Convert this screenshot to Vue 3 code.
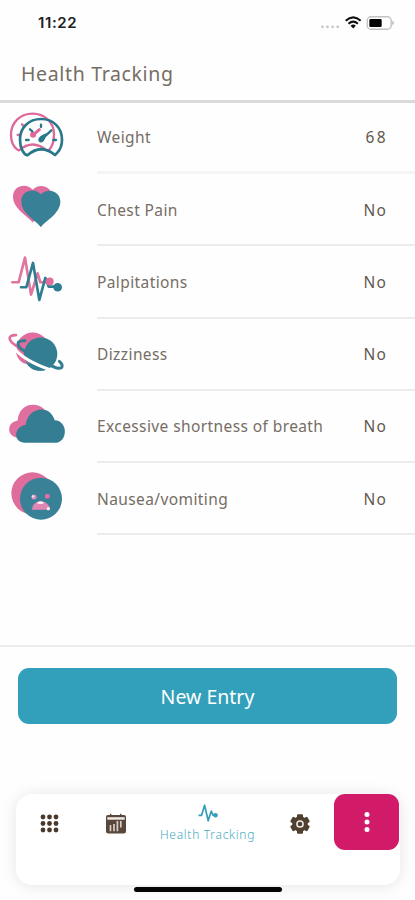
<script setup>
const rows = [
  { id: 'weight', label: 'Weight', value: '68', box: '0 3 240 216' },
  { id: 'chest', label: 'Chest Pain', value: 'No', box: '0 3.6 240 216' },
  { id: 'palpitations', label: 'Palpitations', value: 'No', box: '0 4.2 240 216' },
  { id: 'dizziness', label: 'Dizziness', value: 'No', box: '0 -1.2 240 216' },
  { id: 'breath', label: 'Excessive shortness of breath', value: 'No', box: '0 -0.6 240 216' },
  { id: 'nausea', label: 'Nausea/vomiting', value: 'No', box: '0 0 240 216' }
]
const dots = [3, 9.5, 16]
const teeth = [0, 60, 120, 180, 240, 300]
</script>

<template>
  <div class="screen">
    <div class="status">
      <span class="time">11:22</span>
      <svg class="indicators" width="76" height="16" viewBox="0 0 76 16">
        <g fill="#c6c6c6">
          <circle cx="2.4" cy="11.8" r="1.4" /><circle cx="7.5" cy="11.8" r="1.4" />
          <circle cx="12.6" cy="11.8" r="1.4" /><circle cx="17.7" cy="11.8" r="1.4" />
        </g>
        <g fill="none" stroke="#111" stroke-width="2.1">
          <path d="M25.7 5.7Q33.2-1 40.7 5.7" />
          <path d="M28.5 8.8Q33.2 4.6 37.9 8.8" />
        </g>
        <path d="M30.6 10.7Q33.2 8.5 35.8 10.7L33.2 13.5Z" fill="#111" />
        <rect x="47.2" y="1.8" width="24" height="12.4" rx="3.8" fill="#fff" stroke="#c2c2c2" stroke-width="1.4" />
        <rect x="49.3" y="4.1" width="12.4" height="8" rx="1.3" fill="#050505" />
        <path d="M72.2 5.8Q75.8 8 72.2 10.3Z" fill="#bdbdbd" />
      </svg>
    </div>

    <header class="header"><h1>Health Tracking</h1></header>

    <main class="list">
      <div v-for="row in rows" :key="row.id" class="row">
        <svg class="row-icon" :viewBox="row.box">
          <template v-if="row.id === 'weight'">
            <g fill="none" stroke="#df689b" stroke-width="7" stroke-linejoin="round" stroke-linecap="round">
              <path d="M57 151L52 149C39 139 33 121 33 105C33 66 62 41 98 41C134 41 162 67 162 103C162 124 157 139 148 149L142 153Q99 115 57 151" />
              <path d="M53 105H60M66 73L71 78" />
              <path d="M99 105L118 89" stroke-width="9" />
            </g>
            <circle cx="99" cy="104" r="9" fill="#df689b" />
            <g fill="none" stroke="#28778b" stroke-width="8" stroke-linejoin="round" stroke-linecap="round">
              <path d="M82 166Q73 163 67 151Q60 137 60 119C60 82 87 57 123 57C160 57 186 83 186 119Q186 143 172 158L165 165Q123 130 82 166Z" />
              <path d="M78 120H86M90 88L97 94M123 74V81M160 120H168" stroke-width="7" />
              <path d="M125 118L154 91" stroke-width="7" />
            </g>
            <path d="M116 124C112 115 120 109 128 104L141 99L135 116C131 127 122 131 116 124Z" fill="#28778b" />
          </template>
          <template v-else-if="row.id === 'chest'">
            <path d="M98 152C84 132 39 112 39 74C39 43 78 31 98 54C115 32 158 42 157 76C157 111 115 131 98 152Z" fill="#df6d9d" />
            <path d="M123 166C108 145 64 126 64 88C64 57 104 46 123 68C141 46 182 57 181 90C181 126 137 146 123 166Z" fill="#378096" />
          </template>
          <template v-else-if="row.id === 'palpitations'">
            <g fill="none" stroke-width="8" stroke-linejoin="round" stroke-linecap="round">
              <path d="M37 116H56L75 42L93 153L113 89L121 116H148" stroke="#e0759f" />
              <path d="M63 131H79L99 58L118 169L136 103L146 129H169" stroke="#2e7e91" />
            </g>
            <circle cx="149" cy="114" r="12" fill="#e26c9d" />
            <circle cx="173" cy="131" r="13" fill="#2e7e91" />
          </template>
          <template v-else-if="row.id === 'dizziness'">
            <circle cx="98" cy="90" r="48" fill="#e06d9e" />
            <circle cx="122" cy="107" r="50" fill="#347e92" />
            <path d="M44 91C65 118 102 137 150 154" fill="none" stroke="#fefefe" stroke-width="9" />
            <path d="M48 102C51 119 63 132 76 136L90 136L76 127C67 122 57 112 48 102Z" fill="#e06d9e" />
            <path d="M76 130Q102 146 137 154Q97 166 76 130Z" fill="#347e92" />
            <path d="M48 50C22 49 24 66 46 80L66 94" fill="none" stroke="#e06d9e" stroke-width="8" stroke-linecap="round" />
            <path d="M75 67C46 65 49 83 72 97C104 119 141 138 168 148C191 154 190 139 178 129" fill="none" stroke="#347e92" stroke-width="9" stroke-linecap="round" />
          </template>
          <template v-else-if="row.id === 'breath'">
            <path d="M50 142C19 136 20 96 53 91C55 62 73 44 99 44C119 43 133 54 140 69L133 142Z" fill="#df6f9e" />
            <path d="M75 158C40 158 39 111 77 104C80 77 100 58 124 58C146 58 158 72 164 90C205 91 205 158 164 158Z" fill="#357d93" />
          </template>
          <template v-else>
            <circle cx="97" cy="94" r="63" fill="#df6d9c" />
            <circle cx="123" cy="110" r="63" fill="#388197" />
            <circle cx="102" cy="105" r="7.5" fill="#d991bd" /><circle cx="99" cy="103" r="3.5" fill="#f4e6f0" />
            <circle cx="142" cy="103" r="7.5" fill="#df6da6" />
            <path d="M96 143C97 127 108 118 122 118C138 118 149 129 150 143Z" fill="#df86b2" />
            <path d="M110 123Q121 113 133 123Q121 129 110 123Z" fill="#fff0f5" />
            <circle cx="145" cy="140" r="5" fill="#fff0f5" />
          </template>
        </svg>
        <div class="row-body">
          <span class="label">{{ row.label }}</span>
          <span class="value">{{ row.value }}</span>
        </div>
      </div>
    </main>

    <section class="action"><button class="new-entry">New Entry</button></section>

    <footer class="footer">
      <nav class="nav">
        <div class="nav-item">
          <svg width="19" height="19" viewBox="0 0 19 19" fill="#49382b">
            <template v-for="y in dots" :key="y">
              <circle v-for="x in dots" :key="x" :cx="x" :cy="y" r="2.4" />
            </template>
          </svg>
        </div>
        <div class="nav-item">
          <svg width="22" height="22" viewBox="0 0 22 22">
            <path d="M3 2H5V.8H6.4V2H15V.8H16.4V2H19Q21 2 21 4V18Q21 20.5 18.5 20.5H3.5Q1 20.5 1 18V4Q1 2 3 2Z" fill="#59473b" />
            <path d="M2.3 4.2H19.7V6.7H2.3Z" fill="#eeeae7" />
            <path d="M5.5 12V18.2M9 11V18.2M12.4 8V18.2M15.8 8V14.5" stroke="#d6cec8" stroke-width="1.7" />
          </svg>
        </div>
        <div class="nav-item active">
          <svg width="20" height="20" viewBox="0 0 20 20">
            <path d="M.5 12.4H3.5L6.6 2.2L10.2 17.8L13.3 8L15 12.2H17" fill="none" stroke="#359eb7" stroke-width="1.7" stroke-linejoin="round" />
            <circle cx="17.5" cy="12.3" r="2.3" fill="#359eb7" />
          </svg>
          <span>Health Tracking</span>
        </div>
        <div class="nav-item">
          <svg width="22" height="22" viewBox="0 0 22 22">
            <g fill="#50402f">
              <circle cx="11" cy="11" r="7.8" />
              <rect v-for="angle in teeth" :key="angle" x="8" y="1.2" width="6" height="6" rx="1" :transform="`rotate(${angle} 11 11)`" />
            </g>
            <circle cx="11" cy="11" r="3.1" fill="#50402f" stroke="#f0ece8" stroke-width="1.5" />
          </svg>
        </div>
        <button class="more" aria-label="More">
          <svg width="8" height="22" viewBox="0 0 8 22" fill="#fff">
            <circle cx="4" cy="3.5" r="2.5" /><circle cx="4" cy="11" r="2.5" /><circle cx="4" cy="18.5" r="2.5" />
          </svg>
        </button>
      </nav>
      <div class="home-bar"></div>
    </footer>
  </div>
</template>

<style>
body { margin: 0; background: #fff; }
</style>

<style scoped>
.screen {
  width: 415px;
  height: 900px;
  display: flex;
  flex-direction: column;
  overflow: hidden;
  background: #fefefe;
  color: #766d65;
  font-family: "Noto Sans", "Open Sans", sans-serif;
}
.screen * { box-sizing: border-box; }
button { border: 0; padding: 0; font-family: inherit; }
.status {
  height: 46px;
  flex: none;
  display: flex;
  justify-content: space-between;
  padding: 13px 19px 0 38px;
}
.time {
  font: 600 15px/20px Inter, sans-serif;
  letter-spacing: .6px;
  color: #202020;
}
.indicators { margin-top: 2px; }
.header {
  height: 57px;
  flex: none;
  padding: 14px 21px 0;
  border-bottom: 3px solid #dadada;
}
h1 {
  margin: 0;
  font-size: 19.5px;
  line-height: 28px;
  font-weight: 400;
  letter-spacing: .65px;
}
.list { flex: none; margin-top: -2px; }
.row { display: flex; height: 72.2px; }
.row-icon { width: 80px; height: 72px; flex: none; }
.row-body {
  flex: 1;
  margin: 0 0 -1px 17px;
  padding: 2px 28px 0 0;
  display: flex;
  align-items: center;
  justify-content: space-between;
  border-bottom: 2px solid #ececec;
  font-size: 15.5px;
  white-space: nowrap;
}
.row:first-child .row-body { border-bottom: 3px solid #f5f5f5; }
.label { letter-spacing: .4px; }
.value { letter-spacing: 1.2px; font-size: 15.5px; color: #62584f; }
.row:first-child .value { letter-spacing: 2.4px; margin-right: -1px; }
.action {
  flex: none;
  height: 112.8px;
  margin-top: 111px;
  border-top: 2px solid #ececec;
  padding: 20.8px 18px 0;
}
.new-entry {
  display: block;
  width: 379px;
  height: 56px;
  border-radius: 11px;
  background: #329fbb;
  color: #fff;
  font-size: 19.5px;
  line-height: 58px;
}
.footer { flex: none; padding: 36px 15px 0 16px; }
.nav {
  width: 384px;
  height: 91px;
  display: grid;
  grid-template-columns: 67px 66px 117px 68px 66px;
  align-items: start;
  background: #fff;
  border-radius: 16px;
  box-shadow: 0 1px 16px rgba(0, 0, 0, .1);
}
.nav-item {
  height: 60px;
  display: flex;
  align-items: center;
  justify-content: center;
}
.nav-item svg { flex: none; }
.nav-item.active {
  flex-direction: column;
  justify-content: flex-start;
  padding-top: 9px;
  color: #48a9c0;
  font-size: 12px;
  line-height: 16px;
  font-weight: 300;
  letter-spacing: .72px;
  white-space: nowrap;
}
.active span { margin-top: 4px; }
.more {
  width: 65px;
  height: 56px;
  border-radius: 11px;
  background: #d21b68;
  display: flex;
  align-items: center;
  justify-content: center;
}
.home-bar {
  width: 148px;
  height: 5px;
  margin: 2px auto 0;
  border-radius: 3px;
  background: #050505;
}
</style>
